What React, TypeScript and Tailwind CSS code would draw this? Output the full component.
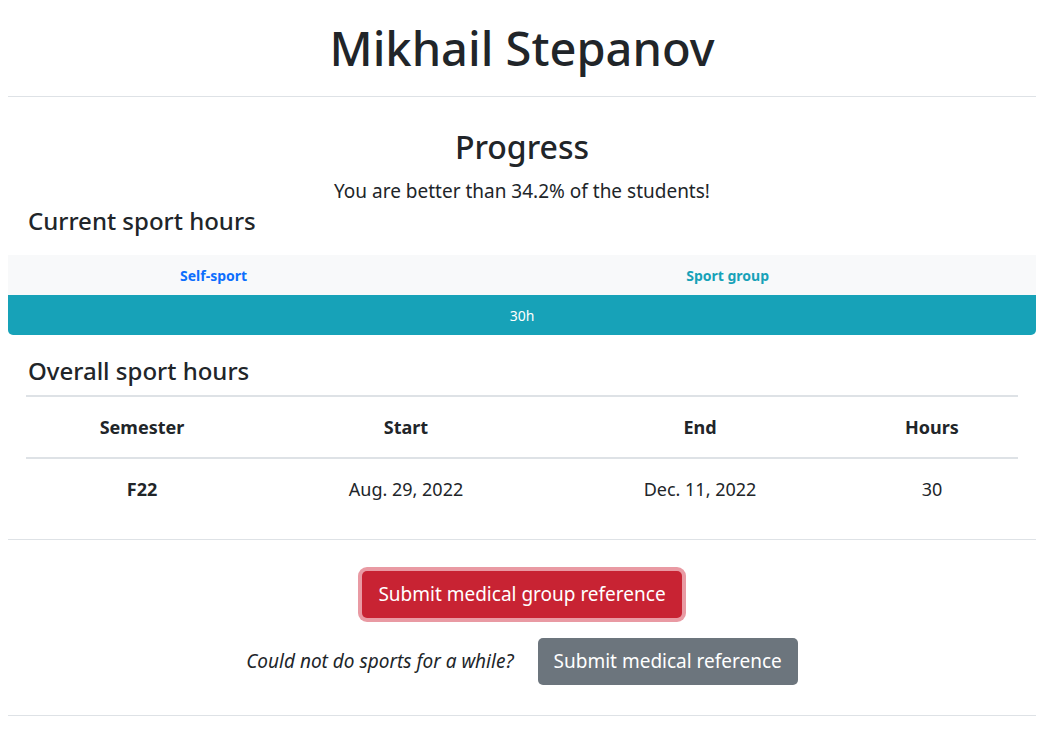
import React from 'react';

const rows = [{ semester: 'F22', start: 'Aug. 29, 2022', end: 'Dec. 11, 2022', hours: 30 }];

export default function App() {
  return (
    <div className="bg-white text-[#212529] pl-2 pr-4 font-['Noto_Sans',sans-serif]">
      {/* Header */}
      <div className="h-[97px] flex items-center justify-center border-b border-[#dee2e6]">
        <h1 className="text-[47px] leading-none font-medium">Mikhail Stepanov</h1>
      </div>

      {/* Progress */}
      <div className="pt-[28px] text-center">
        <h2 className="text-[32px] leading-[44px] font-medium">Progress</h2>
        <p className="text-[19px] leading-[24px] mt-[10px]">You are better than 34.2% of the students!</p>
      </div>

      <h3 className="pl-5 text-[24px] leading-[36px] font-medium">Current sport hours</h3>

      <div className="mt-[16px]">
        <div className="grid grid-cols-[40%_60%] h-10 bg-[#f8f9fa] items-center text-[14px] font-bold">
          <div className="text-center text-[#0d6efd]">Self-sport</div>
          <div className="text-center text-[#17a2b8]">Sport group</div>
        </div>
        <div className="h-10 bg-[#17a2b8] rounded-b-[5px] flex items-center justify-center text-white text-[14px]">
          30h
        </div>
      </div>

      {/* Overall */}
      <h3 className="pl-5 text-[24px] leading-[36px] font-medium mt-[18px]">Overall sport hours</h3>
      <div className="px-[18px] mt-[6px]">
        <table className="w-full border-t-2 border-[#dee2e6] text-[18px] text-center">
          <thead>
            <tr className="h-[62px] border-b-2 border-[#dee2e6] font-bold">
              <th className="w-[232px]">Semester</th>
              <th className="w-[296px]">Start</th>
              <th className="w-[292px]">End</th>
              <th>Hours</th>
            </tr>
          </thead>
          <tbody>
            {rows.map((r) => (
              <tr key={r.semester} className="h-[62px]">
                <td className="font-bold">{r.semester}</td>
                <td>{r.start}</td>
                <td>{r.end}</td>
                <td>{r.hours}</td>
              </tr>
            ))}
          </tbody>
        </table>
      </div>

      {/* Medical */}
      <div className="mt-[19px] border-t border-[#dee2e6] pt-[31px] pb-[30px] flex flex-col items-center">
        <button className="h-[47px] px-4 rounded-[5px] bg-[#c82333] text-white text-[19px] ring-4 ring-[#e99aa3]">
          Submit medical group reference
        </button>
        <div className="mt-[20px] flex items-center gap-6">
          <span className="italic text-[19px]">Could not do sports for a while?</span>
          <button className="h-[47px] px-4 rounded-[5px] bg-[#6c757d] text-white text-[19px]">
            Submit medical reference
          </button>
        </div>
      </div>
      <div className="border-t border-[#dee2e6]" />
    </div>
  );
}
